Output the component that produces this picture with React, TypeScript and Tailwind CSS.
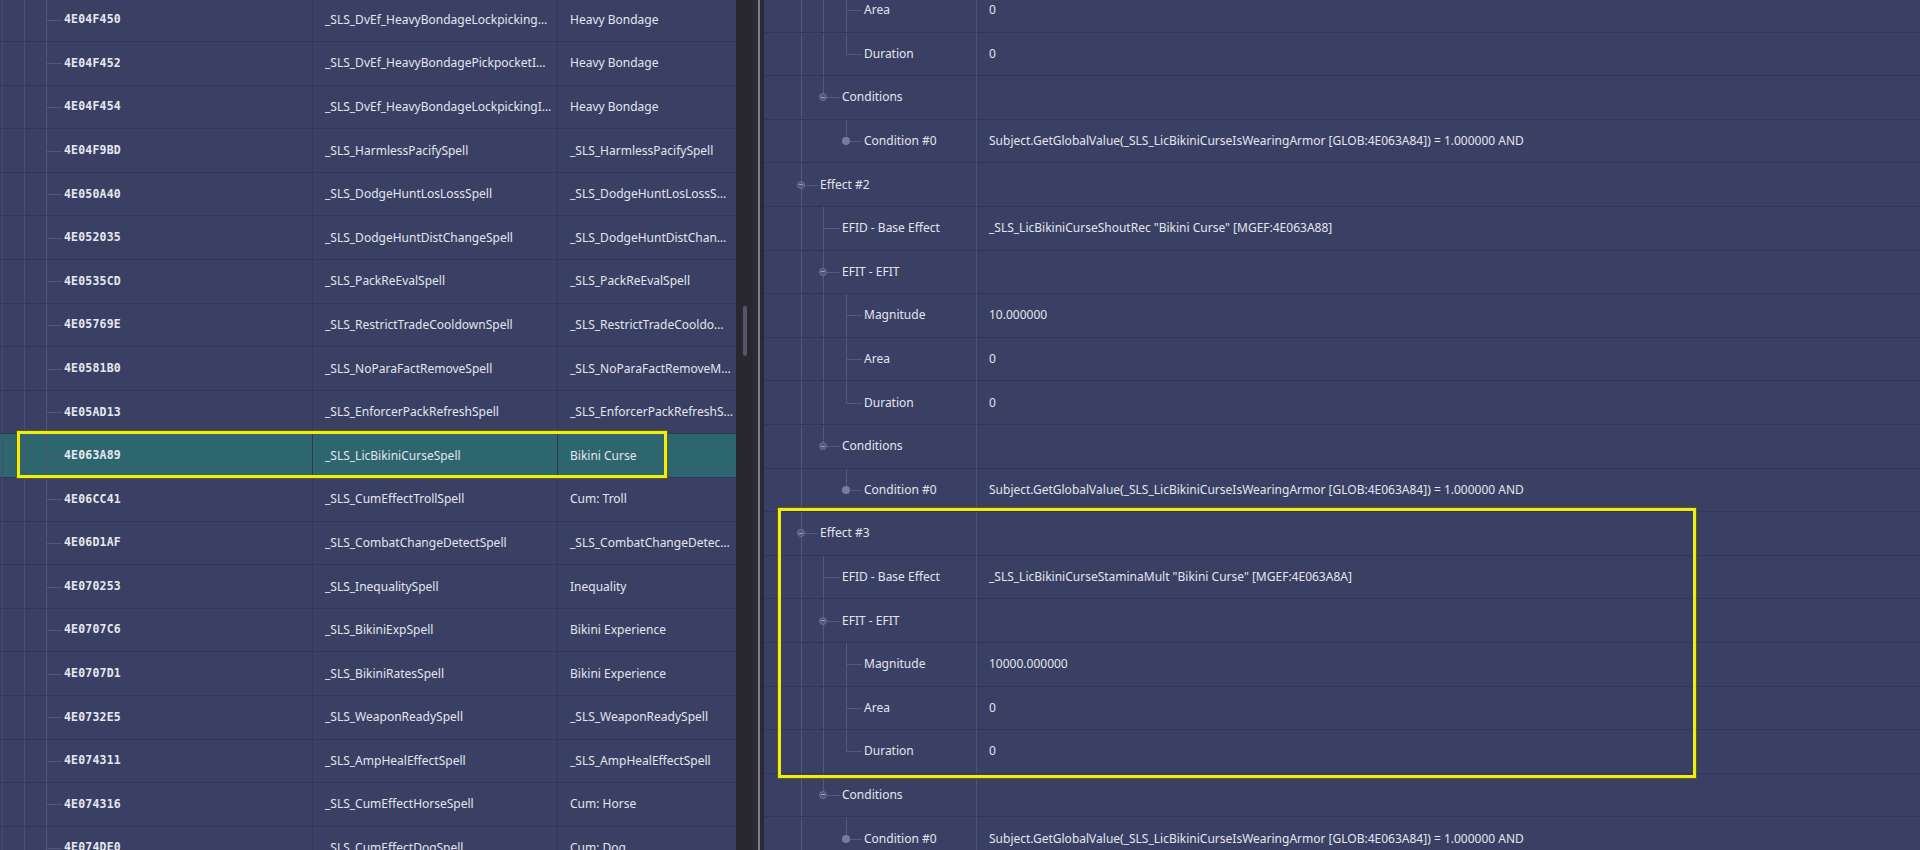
import React from 'react';

type Guide = 'full' | 'half' | 'none';

interface LeftRow {
  id: string;
  editorId: string;
  name: string;
}

interface RightRow {
  level: 0 | 1 | 2;
  label: string;
  value?: string;
  expander?: 'open' | 'dot';
  guides: Guide[];
}

const leftRows: LeftRow[] = [
  { id: '4E04F450', editorId: '_SLS_DvEf_HeavyBondageLockpicking…', name: 'Heavy Bondage' },
  { id: '4E04F452', editorId: '_SLS_DvEf_HeavyBondagePickpocketI…', name: 'Heavy Bondage' },
  { id: '4E04F454', editorId: '_SLS_DvEf_HeavyBondageLockpickingI…', name: 'Heavy Bondage' },
  { id: '4E04F9BD', editorId: '_SLS_HarmlessPacifySpell', name: '_SLS_HarmlessPacifySpell' },
  { id: '4E050A40', editorId: '_SLS_DodgeHuntLosLossSpell', name: '_SLS_DodgeHuntLosLossS…' },
  { id: '4E052035', editorId: '_SLS_DodgeHuntDistChangeSpell', name: '_SLS_DodgeHuntDistChan…' },
  { id: '4E0535CD', editorId: '_SLS_PackReEvalSpell', name: '_SLS_PackReEvalSpell' },
  { id: '4E05769E', editorId: '_SLS_RestrictTradeCooldownSpell', name: '_SLS_RestrictTradeCooldo…' },
  { id: '4E0581B0', editorId: '_SLS_NoParaFactRemoveSpell', name: '_SLS_NoParaFactRemoveM…' },
  { id: '4E05AD13', editorId: '_SLS_EnforcerPackRefreshSpell', name: '_SLS_EnforcerPackRefreshS…' },
  { id: '4E063A89', editorId: '_SLS_LicBikiniCurseSpell', name: 'Bikini Curse' },
  { id: '4E06CC41', editorId: '_SLS_CumEffectTrollSpell', name: 'Cum: Troll' },
  { id: '4E06D1AF', editorId: '_SLS_CombatChangeDetectSpell', name: '_SLS_CombatChangeDetec…' },
  { id: '4E070253', editorId: '_SLS_InequalitySpell', name: 'Inequality' },
  { id: '4E0707C6', editorId: '_SLS_BikiniExpSpell', name: 'Bikini Experience' },
  { id: '4E0707D1', editorId: '_SLS_BikiniRatesSpell', name: 'Bikini Experience' },
  { id: '4E0732E5', editorId: '_SLS_WeaponReadySpell', name: '_SLS_WeaponReadySpell' },
  { id: '4E074311', editorId: '_SLS_AmpHealEffectSpell', name: '_SLS_AmpHealEffectSpell' },
  { id: '4E074316', editorId: '_SLS_CumEffectHorseSpell', name: 'Cum: Horse' },
  { id: '4E074DE0', editorId: '_SLS_CumEffectDogSpell', name: 'Cum: Dog' },
];

const SELECTED = '4E063A89';
const COND = 'Subject.GetGlobalValue(_SLS_LicBikiniCurseIsWearingArmor [GLOB:4E063A84]) = 1.000000 AND';

function effectBlock(n: number, efid: string, magnitude: string): RightRow[] {
  return [
    { level: 0, label: `Effect #${n}`, expander: 'open', guides: ['full'] },
    { level: 1, label: 'EFID - Base Effect', value: efid, guides: ['full', 'full'] },
    { level: 1, label: 'EFIT - EFIT', expander: 'open', guides: ['full', 'full'] },
    { level: 2, label: 'Magnitude', value: magnitude, guides: ['full', 'full', 'full'] },
    { level: 2, label: 'Area', value: '0', guides: ['full', 'full', 'full'] },
    { level: 2, label: 'Duration', value: '0', guides: ['full', 'full', 'half'] },
    { level: 1, label: 'Conditions', expander: 'open', guides: ['full', 'half'] },
    { level: 2, label: 'Condition #0', value: COND, expander: 'dot', guides: ['full', 'none', 'half'] },
  ];
}

const rightRows: RightRow[] = [
  { level: 2, label: 'Area', value: '0', guides: ['full', 'full', 'full'] },
  { level: 2, label: 'Duration', value: '0', guides: ['full', 'full', 'half'] },
  { level: 1, label: 'Conditions', expander: 'open', guides: ['full', 'half'] },
  { level: 2, label: 'Condition #0', value: COND, expander: 'dot', guides: ['full', 'none', 'half'] },
  ...effectBlock(2, '_SLS_LicBikiniCurseShoutRec "Bikini Curse" [MGEF:4E063A88]', '10.000000'),
  ...effectBlock(3, '_SLS_LicBikiniCurseStaminaMult "Bikini Curse" [MGEF:4E063A8A]', '10000.000000'),
];

const guideLeft = ['left-[37px]', 'left-[59px]', 'left-[82px]'];
const connector = ['left-[37px] w-[17px]', 'left-[59px] w-[17px]', 'left-[82px] w-[16px]'];
const knob = ['left-[33px]', 'left-[55px]', 'left-[78px]'];
const labelPad = ['pl-[56px]', 'pl-[78px]', 'pl-[100px]'];

const uiFont = "font-['Noto_Sans','Open_Sans',sans-serif] text-[12px] text-[#e3e5ee]";

function Expander({ level, kind }: { level: number; kind: 'open' | 'dot' }) {
  return (
    <span
      className={`absolute top-1/2 -translate-y-1/2 ${knob[level]} w-[8px] h-[8px] rounded-full flex items-center justify-center ${
        kind === 'open' ? 'bg-[#4f5677] border border-[#6a7192]' : 'bg-[#767d9b]'
      }`}
    >
      {kind === 'open' && <span className="block w-[4px] h-px bg-[#9aa0b8]" />}
    </span>
  );
}

function LeftPanel() {
  return (
    <div className="relative w-[736px] shrink-0 h-full overflow-hidden bg-[#394063]">
      <div className="-mt-[1.5px] flex flex-col">
        {leftRows.map((r) => (
          <div
            key={r.id}
            className={`flex h-[43.6px] shrink-0 border-b border-[#31375a] ${r.id === SELECTED ? 'bg-[#2e6670]' : ''}`}
          >
            <div className="relative w-[312px] shrink-0 flex items-center pl-[64px]">
              <span className="absolute left-[2px] top-0 bottom-0 w-px bg-[#454c6e]" />
              <span className="absolute left-[24px] top-0 bottom-0 w-px bg-[#4b5274]" />
              <span className="absolute left-[46px] top-0 bottom-0 w-px bg-[#4f5677]" />
              <span className="absolute left-[47px] top-1/2 w-[15px] h-px bg-[#4f5677]" />
              <span className="font-['DejaVu_Sans_Mono',monospace] font-bold text-[11.5px] text-[#e6e8f0] tracking-[0.2px]">
                {r.id}
              </span>
            </div>
            <div className={`w-[245px] shrink-0 flex items-center pl-[12px] border-l border-[#31375a] whitespace-nowrap overflow-hidden ${uiFont}`}>
              {r.editorId}
            </div>
            <div className={`flex-1 flex items-center pl-[12px] border-l border-[#31375a] whitespace-nowrap overflow-hidden ${uiFont}`}>
              {r.name}
            </div>
          </div>
        ))}
      </div>
      <div className="absolute left-[17px] top-[431px] w-[650px] h-[47px] border-[3px] border-[#f0ee10] shadow-[0_0_0_1px_#5c5a1a]" />
    </div>
  );
}

function Splitter() {
  return (
    <div className="flex h-full shrink-0">
      <div className="w-[17px] h-full bg-[#29282f] pt-[306px] flex justify-center">
        <div className="w-[4px] h-[50px] rounded-full bg-[#55546a]" />
      </div>
      <div className="w-[5px] h-full bg-[#2d2c36]" />
      <div className="w-[2px] h-full bg-[#7f7f8a]" />
      <div className="w-[4px] h-full bg-[#2b2a33]" />
    </div>
  );
}

function RightPanel() {
  return (
    <div className="relative flex-1 h-full overflow-hidden bg-[#394063]">
      <div className="-mt-[11px] flex flex-col">
        {rightRows.map((r, i) => (
          <div key={i} className="flex h-[43.6px] shrink-0 border-b border-[#31375a]">
            <div className={`relative w-[212px] shrink-0 flex items-center ${labelPad[r.level]} ${uiFont}`}>
              {r.guides.map((g, lvl) =>
                g === 'none' ? null : (
                  <span
                    key={lvl}
                    className={`absolute top-0 w-px bg-[#525979] ${guideLeft[lvl]} ${g === 'full' ? 'bottom-0' : 'h-1/2'}`}
                  />
                )
              )}
              <span className={`absolute top-1/2 h-px bg-[#525979] ${connector[r.level]}`} />
              {r.expander && <Expander level={r.level} kind={r.expander} />}
              <span className="relative whitespace-nowrap">{r.label}</span>
            </div>
            <div className={`flex-1 flex items-center pl-[12px] border-l border-[#4c5374] whitespace-nowrap overflow-hidden ${uiFont}`}>
              {r.value}
            </div>
          </div>
        ))}
      </div>
      <div className="absolute left-[14px] top-[508px] w-[918px] h-[270px] border-[3px] border-[#f0ee10] shadow-[0_0_0_1px_#5c5a1a]" />
    </div>
  );
}

export default function App() {
  return (
    <div className="w-[1920px] h-[850px] flex overflow-hidden bg-[#29282f]">
      <LeftPanel />
      <Splitter />
      <RightPanel />
    </div>
  );
}
